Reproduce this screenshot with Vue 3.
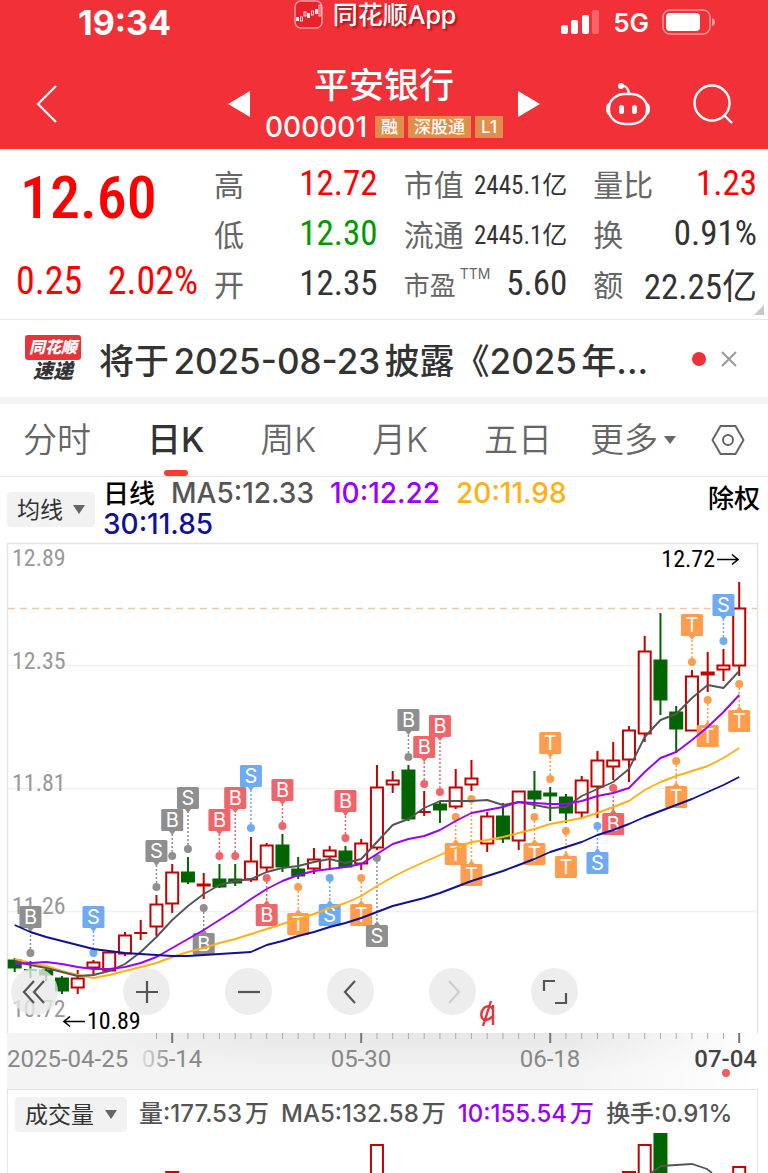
<template>
    <div class="stock-page">
        <header class="top-bar">
            <div class="status-bar">
                <span class="clock">19:34</span>
                <div class="source-app">
                    <svg width="30" height="30" viewBox="0 0 30 30">
                        <rect x="1" y="1" width="27" height="27" rx="6" fill="#e8222b" stroke="#f79a9e" stroke-width="1.5" />
                        <g fill="#fff">
                            <rect x="2" y="17" width="3" height="4" />
                            <rect x="13" y="13" width="3" height="5" />
                            <rect x="21" y="9" width="3" height="5" />
                        </g>
                        <g fill="none" stroke="#fff" stroke-width="0.8">
                            <rect x="6.500" y="17" width="2" height="4" />
                            <rect x="10" y="12" width="2" height="4" />
                            <rect x="17.500" y="11" width="2" height="4" />
                            <rect x="25" y="5" width="2" height="11" />
                        </g>
                    </svg>
                    <span>同花顺App</span>
                </div>
                <div class="signal">
                    <svg width="39" height="26" viewBox="0 0 39 26">
                        <g fill="#fff">
                            <rect x="0" y="16" width="7" height="9" rx="2" />
                            <rect x="10" y="11" width="7" height="14" rx="2" />
                            <rect x="21" y="6" width="7" height="19" rx="2" />
                            <rect x="31" y="1" width="7" height="24" rx="2" opacity=".25" />
                        </g>
                    </svg>
                    <span>5G</span>
                    <svg width="54" height="26" viewBox="0 0 54 26">
                        <rect x="1" y="1" width="47" height="24" rx="7" fill="none" stroke="#fff" stroke-width="1.6" opacity=".5" />
                        <rect x="4" y="4" width="34" height="18" rx="4" fill="#fff" />
                        <path d="M50 9q3 1 3 4t-3 4z" fill="#fff" opacity=".5" />
                    </svg>
                </div>
            </div>
            <div class="nav-bar">
                <button class="icon-btn back" aria-label="返回">
                    <svg width="24" height="40" viewBox="0 0 24 40"><path d="M21 2 3 20l18 18" fill="none" stroke="#fff" stroke-width="2.2" /></svg>
                </button>
                <div class="stock-switch">
                    <button class="icon-btn" aria-label="上一只">
                        <svg width="22" height="26" viewBox="0 0 22 26"><path d="M22 0v26L0 13z" fill="#fff" /></svg>
                    </button>
                    <div class="stock-title">
                        <h1>平安银行</h1>
                        <div class="stock-code">
                            <span class="code">000001</span>
                            <span v-for="tag in stockTags" :key="tag" class="stock-tag">{{ tag }}</span>
                        </div>
                    </div>
                    <button class="icon-btn" aria-label="下一只">
                        <svg width="22" height="26" viewBox="0 0 22 26"><path d="M0 0v26l22-13z" fill="#fff" /></svg>
                    </button>
                </div>
                <div class="nav-actions">
                    <button class="icon-btn" aria-label="助手">
                        <svg width="46" height="44" viewBox="0 0 46 44">
                            <g fill="none" stroke="#fff" stroke-width="2.4">
                                <rect x="4" y="12" width="38" height="30" rx="16" ry="14" />
                                <path d="M16 4q7-1 8 8" />
                            </g>
                            <path d="M4 21q-3 1-3 6t3 6zM42 21q3 1 3 6t-3 6z" fill="#fff" />
                            <circle cx="16" cy="4" r="3" fill="#fff" />
                            <rect x="14" y="23" width="5" height="9" rx="2.500" fill="#fff" />
                            <rect x="27" y="23" width="5" height="9" rx="2.500" fill="#fff" />
                        </svg>
                    </button>
                    <button class="icon-btn" aria-label="搜索">
                        <svg width="40" height="40" viewBox="0 0 40 40">
                            <g fill="none" stroke="#fff" stroke-width="2.4">
                                <circle cx="19" cy="19" r="17.500" />
                                <path d="m31 31 8 8" />
                            </g>
                        </svg>
                    </button>
                </div>
            </div>
        </header>

        <section class="quote">
            <div class="price-block">
                <div class="price">12.60</div>
                <div class="change"><span>0.25</span><span>2.02%</span></div>
            </div>
            <dl class="quote-grid">
                <div v-for="item in quoteItems" :key="item.label" class="quote-item">
                    <dt :class="{ compact: item.sup }">{{ item.label }}<sup v-if="item.sup">{{ item.sup }}</sup></dt>
                    <dd :class="[item.tone, { small: item.small }]">{{ item.value }}</dd>
                </div>
            </dl>
            <svg class="corner" width="10" height="10" viewBox="0 0 10 10"><path d="M10 0v10H0z" fill="#c8c8c8" /></svg>
        </section>

        <section class="notice">
            <div class="notice-logo">
                <span class="logo-top">同花顺</span>
                <span class="logo-bottom">速递</span>
            </div>
            <a href="#" class="notice-text">将于2025-08-23披露《2025年...</a>
            <span class="red-dot"></span>
            <button class="icon-btn" aria-label="关闭">
                <svg width="16" height="16" viewBox="0 0 16 16"><path d="m1 1 14 14M15 1 1 15" stroke="#999" stroke-width="2" /></svg>
            </button>
        </section>

        <nav class="period-bar">
            <div class="periods">
                <button v-for="p in periods" :key="p" :class="['period', { active: period === p }]" @click="period = p">{{ p }}</button>
            </div>
            <button class="period more">更多
                <svg width="12" height="8" viewBox="0 0 12 8"><path d="M0 0h12L6 8z" fill="#666" /></svg>
            </button>
            <button class="icon-btn" aria-label="设置">
                <svg width="34" height="32" viewBox="0 0 34 32">
                    <g fill="none" stroke="#666" stroke-width="2">
                        <path d="M9.500 2h15L32.500 16l-8 14h-15L1.500 16z" />
                        <circle cx="17" cy="16" r="5" />
                    </g>
                </svg>
            </button>
        </nav>

        <section class="legend">
            <div class="picker">
                <select v-model="overlay" aria-label="主图指标">
                    <option>均线</option>
                    <option>BOLL</option>
                </select>
                <svg width="12" height="9" viewBox="0 0 12 9"><path d="M0 0h12L6 9z" fill="#666" /></svg>
            </div>
            <div class="legend-values">
                <span class="name">日线</span>
                <span class="ma5">MA5:12.33</span>
                <span class="ma10">10:12.22</span>
                <span class="ma20">20:11.98</span>
                <span class="ma30">30:11.85</span>
            </div>
            <button class="adjust">除权</button>
        </section>

        <section class="chart">
            <svg class="plot" viewBox="0 543 768 490" role="img" aria-label="日K线">
                <path d="M7.500 1033V543.500H757.500V1033" fill="none" stroke="#e4e4e4" stroke-width="1.5" />
                <path d="M8 665.500H757M8 788.500H757M8 911.500H757" stroke="#f0f0f0" stroke-width="1.5" />
                <path d="M8 608.500H757" stroke="#ecc9a0" stroke-width="1.5" stroke-dasharray="7 5" />
                <g class="scale">
                    <text v-for="s in scale" :key="s.text" x="12" :y="s.y">{{ s.text }}</text>
                </g>
                <g v-for="(c, i) in candles" :key="i" :stroke="c[4] ? '#c40000' : '#006400'" stroke-width="2">
                    <path :d="`M${cx(i)} ${c[0]}V${c[1]}M${cx(i)} ${c[2]}V${c[3]}`" />
                    <path v-if="c[2] === c[1]" :d="`M${cx(i) - 6.5} ${c[1]}h13`" />
                    <rect v-else :x="cx(i) - 6" :y="c[1] + 0.5" width="12" :height="c[2] - c[1] - 1" :fill="c[4] ? '#fff' : '#006400'" />
                </g>
                <g v-for="(m, i) in markers" :key="'m' + i" :transform="`translate(${cx(m[0])} 0)`" :fill="markerColors[m[2]]">
                    <path :d="`M0 ${m[4]}V${m[3]}`" :stroke="markerColors[m[2]]" stroke-width="1.5" stroke-dasharray="2 2" />
                    <circle cx="0" :cy="m[4]" r="4" />
                    <g :transform="`translate(0 ${m[3]})`">
                        <path :d="m[4] > m[3] ? 'M-4 10h8L0 15z' : 'M-4-10h8L0-15z'" />
                        <rect x="-11" y="-11" width="22" height="22" rx="1.500" />
                        <text class="marker-text" x="0" y="7">{{ m[1] }}</text>
                    </g>
                </g>
                <polyline v-for="line in averages" :key="line.color" :points="points(line.ys)" fill="none" :stroke="line.color" stroke-width="1.9" stroke-linejoin="round" />
                <g class="extreme">
                    <text x="715" y="567" text-anchor="end">12.72</text>
                    <text x="87" y="1029">10.89</text>
                </g>
                <path d="M717 559.500h21m-6-5 6 5-6 5M85 1021.500H64m6-5-6 5 6 5" fill="none" stroke="#000" stroke-width="1.6" />
                <path d="M493 1005v20M493 1009q-4-5-9-1-4 4-2 10 3 5 11-2M491 1001l-8 25" fill="none" stroke="#e8333a" stroke-width="2.4" />
            </svg>
            <div class="chart-tools">
                <button v-for="tool in tools" :key="tool.name" :aria-label="tool.name" :disabled="tool.disabled">
                    <svg width="28" height="28" viewBox="0 0 28 28"><path :d="tool.path" fill="none" stroke="#555" stroke-width="2.2" /></svg>
                </button>
            </div>
        </section>

        <svg class="time-axis" viewBox="0 1033 768 56" role="img" aria-label="日期">
            <defs>
                <linearGradient id="axisShade" x1="0" x2="0" y1="0" y2="1">
                    <stop offset="0" stop-color="#e7e7e7" />
                    <stop offset="0.7" stop-color="#f4f4f4" />
                </linearGradient>
                <linearGradient id="axisEdge">
                    <stop offset="0.05" stop-color="#f4f4f4" />
                    <stop offset="0.35" stop-color="#f4f4f4" stop-opacity="0" />
                    <stop offset="0.75" stop-color="#fff" stop-opacity="0" />
                    <stop offset="1" stop-color="#fff" />
                </linearGradient>
                <linearGradient id="fadeText">
                    <stop offset="0" stop-color="#ddd" />
                    <stop offset="0.5" stop-color="#888" />
                </linearGradient>
            </defs>
            <rect x="7" y="1033" width="751" height="56" fill="url(#axisShade)" />
            <rect x="7" y="1033" width="751" height="56" fill="url(#axisEdge)" />
            <path v-for="i in ticks" :key="i" :d="`M${cx(i)} 1033v${i % 12 === 10 ? 10 : 6}`" :stroke="i % 12 === 10 ? '#777' : '#aaa'" :stroke-width="i % 12 === 10 ? 2 : 1" />
            <text x="7" y="1067">2025-04-25</text>
            <text x="172" y="1067" text-anchor="middle" class="fading">05-14</text>
            <text x="361" y="1067" text-anchor="middle">05-30</text>
            <text x="550" y="1067" text-anchor="middle">06-18</text>
            <text x="757" y="1067" text-anchor="end" class="today">07-04</text>
            <circle cx="726" cy="1073" r="4" fill="#f25b60" />
        </svg>

        <section class="volume">
            <div class="volume-head">
                <div class="picker">
                    <select v-model="indicator" aria-label="副图指标">
                        <option>成交量</option>
                        <option>MACD</option>
                    </select>
                    <svg width="12" height="9" viewBox="0 0 12 9"><path d="M0 0h12L6 9z" fill="#666" /></svg>
                </div>
                <span>量:177.53万</span>
                <span>MA5:132.58万</span>
                <span class="ma10">10:155.54万</span>
                <span>换手:0.91%</span>
            </div>
            <svg class="volume-plot" viewBox="0 1133 768 40" role="img" aria-label="成交量">
                <path d="M7.500 1133v40M757.500 1133v40" stroke="#e4e4e4" stroke-width="1" />
                <g fill="#fff" stroke="#c40000" stroke-width="2">
                    <rect v-for="v in volumes" :key="v[0]" :x="cx(v[0]) - 6" :y="v[1]" width="12" height="60" />
                </g>
                <rect :x="cx(41) - 7" y="1133" width="14" height="50" fill="#006400" />
                <path d="M651 1173l10-7 15-1 16-1 15 5 5 4" fill="none" stroke="#555" stroke-width="1.8" />
            </svg>
        </section>
    </div>
</template>

<script setup>
import { ref } from 'vue'

const period = ref('日K')
const overlay = ref('均线')
const indicator = ref('成交量')

const stockTags = ['融', '深股通', 'L1']
const periods = ['分时', '日K', '周K', '月K', '五日']

const quoteItems = [
    { label: '高', value: '12.72', tone: 'up' },
    { label: '市值', value: '2445.1亿', small: true },
    { label: '量比', value: '1.23', tone: 'up' },
    { label: '低', value: '12.30', tone: 'down' },
    { label: '流通', value: '2445.1亿', small: true },
    { label: '换', value: '0.91%' },
    { label: '开', value: '12.35' },
    { label: '市盈', sup: 'TTM', value: '5.60' },
    { label: '额', value: '22.25亿' }
]

const scale = [
    { text: '12.89', y: 566 },
    { text: '12.35', y: 669 },
    { text: '11.81', y: 791 },
    { text: '11.26', y: 914 },
    { text: '10.72', y: 1017 }
]

const cx = (i) => 14.7 + i * 15.75
const points = (ys) => ys.map((y, i) => `${cx(i)},${y}`).join(' ')

// wick top, body top, body bottom, wick bottom, rising
const candles = [
    [958, 960, 968, 972, 0], [961, 970, 970, 978, 0], [968, 970, 975, 981, 0], [976, 978, 991, 994, 0],
    [970, 978, 988, 994, 1], [960, 962, 968, 975, 1], [952, 952, 971, 971, 1], [932, 935, 954, 956, 1],
    [920, 933, 933, 940, 1], [895, 904, 927, 936, 1], [864, 872, 904, 913, 1], [857, 872, 882, 884, 0],
    [873, 884, 886, 899, 1], [864, 879, 887, 888, 0], [864, 879, 883, 886, 0], [837, 861, 880, 882, 1],
    [843, 845, 868, 872, 1], [834, 845, 867, 872, 0], [857, 869, 876, 879, 0], [848, 859, 869, 874, 1],
    [846, 850, 857, 870, 1], [846, 851, 867, 867, 0], [839, 843, 864, 870, 1], [765, 787, 848, 850, 1],
    [771, 780, 785, 793, 1], [765, 770, 819, 821, 0], [791, 812, 812, 816, 1], [802, 804, 810, 823, 0],
    [769, 787, 807, 809, 1], [760, 778, 785, 791, 1], [812, 816, 844, 852, 1], [803, 816, 839, 843, 0],
    [791, 791, 841, 850, 1], [771, 791, 799, 809, 0], [787, 793, 796, 821, 0], [794, 797, 813, 823, 0],
    [776, 780, 813, 818, 1], [751, 760, 787, 818, 1], [742, 760, 767, 780, 1], [726, 730, 760, 782, 1],
    [636, 651, 734, 742, 1], [613, 660, 700, 715, 0], [706, 712, 729, 753, 0], [670, 676, 731, 731, 1],
    [652, 672, 675, 692, 1], [649, 665, 670, 681, 1], [582, 608, 666, 676, 1]
]

const averages = [
    { color: '#ffb014', ys: [959, 963, 966, 971, 975, 978, 975, 971, 967, 963, 957, 952, 948, 943, 939, 934, 929, 924, 919, 914, 908, 903, 896, 886, 877, 869, 862, 855, 848, 842, 840, 837, 833, 829, 824, 821, 818, 813, 807, 801, 790, 782, 776, 771, 766, 758, 748] },
    { color: '#555555', ys: [961, 965, 968, 972, 976, 975, 971, 964, 952, 937, 920, 906, 894, 885, 881, 879, 872, 868, 866, 862, 859, 863, 859, 842, 825, 819, 808, 801, 801, 801, 800, 805, 802, 805, 808, 807, 796, 789, 782, 769, 737, 720, 714, 698, 685, 688, 671] },
    { color: '#9900ff', ys: [964, 963, 962, 964, 967, 969, 969, 967, 963, 957, 948, 939, 930, 920, 910, 899, 889, 881, 875, 871, 869, 867, 864, 854, 844, 839, 836, 830, 821, 813, 810, 807, 802, 803, 804, 804, 801, 796, 793, 788, 772, 758, 752, 740, 727, 712, 695] },
    { color: '#101098', ys: [925, 932, 937, 941, 945, 949, 951, 953, 954, 955, 956, 956, 955, 954, 953, 952, 945, 941, 936, 932, 927, 923, 918, 912, 906, 902, 898, 893, 887, 881, 876, 871, 865, 859, 852, 847, 842, 835, 830, 824, 817, 811, 805, 799, 792, 785, 777] }
]

const markerColors = { gray: '#8f8f8f', red: '#f0656a', blue: '#6fabf2', orange: '#ff9c4d' }

// candle index, letter, colour, badge y, dot y
const markers = [
    [1, 'B', 'gray', 917, 953], [5, 'S', 'blue', 917, 953], [9, 'S', 'gray', 851, 887],
    [10, 'B', 'gray', 820, 856], [11, 'S', 'gray', 798, 849], [12, 'B', 'gray', 944, 908],
    [13, 'B', 'red', 820, 856], [14, 'B', 'red', 798, 856], [15, 'S', 'blue', 776, 828],
    [16, 'B', 'red', 915, 878], [17, 'B', 'red', 790, 826], [18, 'T', 'orange', 924, 887],
    [20, 'S', 'blue', 915, 878], [21, 'B', 'red', 801, 838], [22, 'T', 'orange', 915, 878],
    [23, 'S', 'gray', 936, 858], [25, 'B', 'gray', 720, 757], [26, 'B', 'red', 747, 784],
    [27, 'B', 'red', 726, 792], [28, 'T', 'orange', 854, 817], [29, 'T', 'orange', 875, 799],
    [33, 'T', 'orange', 854, 817], [34, 'T', 'orange', 743, 779], [35, 'T', 'orange', 867, 831],
    [37, 'S', 'blue', 863, 826], [38, 'B', 'red', 824, 788], [42, 'T', 'orange', 797, 761],
    [43, 'T', 'orange', 625, 662], [44, 'T', 'orange', 736, 700], [45, 'S', 'blue', 605, 641],
    [46, 'T', 'orange', 721, 684]
]

const tools = [
    { name: '最早', path: 'M13 3 3 14l10 11M23 3 13 14l10 11' },
    { name: '放大', path: 'M3 14h22M14 3v22' },
    { name: '缩小', path: 'M3 14h22' },
    { name: '向左', path: 'M18 3 8 14l10 11' },
    { name: '向右', path: 'M10 3l10 11-10 11', disabled: true },
    { name: '全屏', path: 'M3 13V3h11M25 15v10H14' }
]

const ticks = Array.from({ length: 38 }, (_, i) => i + 9)
const volumes = [[10, 1172], [23, 1145], [39, 1172], [40, 1145], [46, 1167]]
</script>

<style>
body {
    margin: 0;
    background: #fff;
}
</style>

<style scoped>
.stock-page {
    font-family: "Inter", "Noto Sans CJK SC", sans-serif;
    color: #333;
    overflow: hidden;
}

svg {
    display: block;
}

button,
select {
    font-family: inherit;
    color: inherit;
    border: none;
    background: none;
    padding: 0;
    cursor: pointer;
}

.top-bar {
    background: #f23038;
    color: #fff;
    height: 149px;
}

.status-bar {
    display: grid;
    grid-template-columns: 1fr auto 1fr;
    align-items: center;
    height: 44px;
}

.clock {
    padding-left: 78px;
    font-size: 34px;
    font-weight: 700;
}

.source-app {
    display: flex;
    align-items: center;
    gap: 9px;
    padding: 0 18px 14px 0;
    font-size: 25px;
    font-weight: 500;
    line-height: 30px;
    text-shadow: 2px 2px 2px rgba(90, 0, 0, 0.5);
}

.signal {
    display: flex;
    align-items: center;
    justify-content: flex-end;
    gap: 13px;
    padding-right: 52px;
    font-size: 26px;
    font-weight: 600;
}

.nav-bar {
    display: grid;
    grid-template-columns: 1fr auto 1fr;
    align-items: center;
    height: 91px;
    padding-top: 14px;
}

.back {
    justify-self: start;
    margin-left: 35px;
}

.stock-switch {
    display: flex;
    align-items: center;
    gap: 15px;
}

.stock-title {
    text-align: center;
}

.stock-title h1 {
    margin: 0;
    font-size: 35px;
    font-weight: 500;
    line-height: 46px;
}

.stock-code {
    display: flex;
    align-items: center;
    gap: 4px;
    height: 38px;
}

.code {
    font-size: 28px;
    font-weight: 500;
    margin-right: 4px;
}

.stock-tag {
    background: #e28e4b;
    font-size: 17px;
    font-weight: 500;
    line-height: 22px;
    padding: 0 6px;
}

.nav-actions {
    display: flex;
    align-items: center;
    justify-content: flex-end;
    gap: 42px;
    padding-right: 35px;
}

.quote {
    position: relative;
    display: flex;
    gap: 16px;
    padding: 9px 11px 11px 16px;
    border-bottom: 1px solid #e9e9e9;
}

.price-block,
.quote dd {
    font-family: "Roboto Condensed", "Liberation Sans Narrow", Roboto, "Noto Sans CJK SC", sans-serif;
    font-weight: 400;
}

.price-block {
    width: 182px;
    flex-shrink: 0;
    color: #f00;
}

.price {
    padding-left: 4px;
    font-size: 60px;
    font-weight: 500;
    line-height: 80px;
}

.change {
    display: flex;
    justify-content: space-between;
    padding-top: 20px;
    font-size: 38px;
    line-height: 46px;
}

.quote-grid {
    flex: 1;
    display: grid;
    grid-template-columns: repeat(3, 1fr);
    grid-auto-rows: 50px;
    column-gap: 26px;
    margin: 0;
}

.quote-item {
    display: flex;
    align-items: center;
    justify-content: space-between;
    white-space: nowrap;
}

.quote-item dt {
    font-size: 30px;
    color: #666;
}

.quote-item dt.compact {
    font-size: 26px;
}

.quote-item sup {
    font-size: 14px;
    line-height: 1;
    vertical-align: 16px;
    margin-left: 4px;
}

.quote-item dd {
    margin: 0;
    font-size: 35px;
}

.quote-item dd.small {
    font-size: 25px;
}

.up {
    color: #f00;
}

.down {
    color: #009a00;
}

.corner {
    position: absolute;
    right: 4px;
    bottom: 4px;
}

.notice {
    display: flex;
    align-items: center;
    height: 77px;
    padding: 0 31px 0 24px;
    border-bottom: 7px solid #f4f4f4;
}

.notice-logo {
    display: flex;
    flex-direction: column;
    align-items: center;
    width: 58px;
    margin-right: 17px;
    font-weight: 900;
    font-style: italic;
}

.logo-top {
    width: 56px;
    background: #e93339;
    color: #fff;
    border-radius: 3px;
    font-size: 16px;
    line-height: 25px;
    text-align: center;
}

.logo-bottom {
    font-size: 20px;
    line-height: 23px;
}

.notice-text {
    flex: 1;
    color: #333;
    font-size: 35px;
    font-weight: 500;
    text-decoration: none;
    white-space: nowrap;
    text-autospace: normal;
}

.red-dot {
    width: 14px;
    height: 14px;
    border-radius: 50%;
    background: #e93339;
    margin-right: 15px;
}

.period-bar {
    display: flex;
    align-items: center;
    height: 72px;
    padding: 0 23px;
    border-bottom: 1px solid #e9e9e9;
}

.periods {
    flex: 1;
    display: flex;
    justify-content: space-between;
    margin-right: 38px;
}

.period {
    position: relative;
    font-size: 34px;
    font-weight: 350;
    line-height: 72px;
    color: #666;
    white-space: nowrap;
}

.period.active {
    color: #333;
    font-weight: 500;
}

.period.active::after {
    content: "";
    position: absolute;
    left: 50%;
    bottom: 0;
    width: 24px;
    height: 6px;
    margin-left: -12px;
    border-radius: 3px;
    background: #ff3b30;
}

.more {
    display: flex;
    align-items: center;
    gap: 6px;
    margin-right: 35px;
}

.legend {
    display: flex;
    align-items: flex-start;
    gap: 8px;
    height: 65px;
    padding: 1px 8px 0 7px;
}

.picker {
    position: relative;
    flex-shrink: 0;
    height: 35px;
    border-radius: 4px;
    background: #f2f2f2;
}

.picker select {
    appearance: none;
    height: 35px;
    padding: 0 32px 0 10px;
    font-size: 23px;
    color: #333;
}

.picker svg {
    position: absolute;
    right: 10px;
    top: 13px;
    pointer-events: none;
}

.legend .picker {
    width: 88px;
    margin-top: 14px;
}

.legend .picker select {
    width: 100%;
    padding-right: 20px;
}

.legend-values {
    flex: 1;
    display: flex;
    flex-wrap: wrap;
    align-items: center;
    column-gap: 16px;
    padding-right: 16px;
    font-size: 28px;
    font-weight: 500;
    line-height: 31px;
}

.name,
.adjust {
    font-size: 26px;
    color: #000;
}

.ma5 {
    color: #555;
}

.ma10 {
    color: #9900ff;
}

.ma20 {
    color: #ffb014;
}

.ma30 {
    color: #101098;
}

.adjust {
    font-weight: 500;
    line-height: 42px;
}

.chart {
    position: relative;
}

.plot,
.time-axis,
.volume-plot {
    width: 100%;
    height: auto;
}

.plot {
    overflow: visible;
}

.scale,
.extreme {
    font-family: "Roboto Condensed", "Liberation Sans Narrow", Roboto, sans-serif;
    font-size: 24px;
}

.scale {
    fill: #999;
}

.marker-text {
    font-size: 20px;
    fill: #fff;
    text-anchor: middle;
}

.chart-tools {
    position: absolute;
    left: 11px;
    bottom: 18px;
    display: flex;
    gap: 55px;
}

.chart-tools button {
    display: grid;
    place-items: center;
    width: 47px;
    height: 47px;
    border-radius: 50%;
    background: rgba(232, 232, 232, 0.8);
}

.chart-tools button:first-child {
    margin-right: 10px;
}

.chart-tools button:disabled svg {
    opacity: 0.2;
}

.time-axis {
    font-family: Roboto, sans-serif;
    font-size: 24px;
}

.time-axis text {
    fill: #888;
}

.time-axis .fading {
    fill: url(#fadeText);
}

.time-axis .today {
    fill: #444;
    font-weight: 500;
}

.volume-head {
    display: flex;
    align-items: center;
    gap: 12px;
    height: 43px;
    margin: 0 10px 0 7px;
    padding-left: 7px;
    border: 1px solid #e4e4e4;
    border-bottom: none;
    font-size: 24px;
    font-weight: 500;
    color: #555;
    white-space: nowrap;
    text-autospace: normal;
}

.volume-head .ma10 {
    color: #9900ff;
}

.volume-head .picker {
    margin-top: 6px;
}
</style>
